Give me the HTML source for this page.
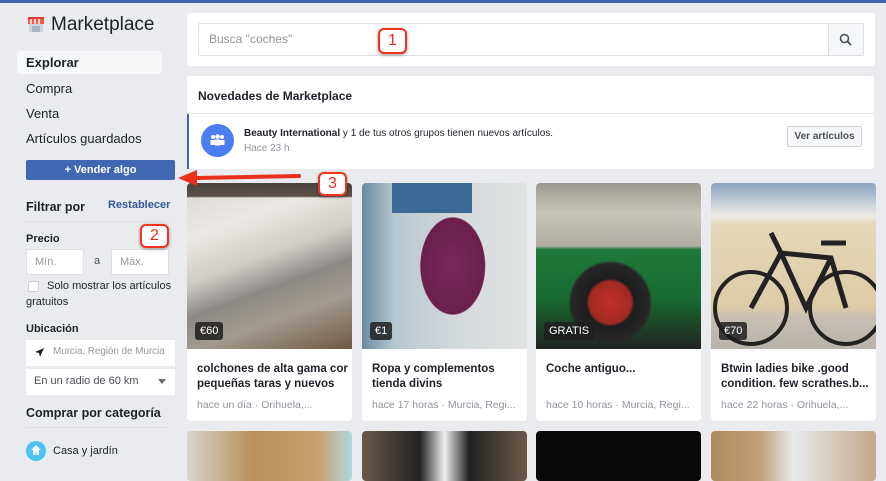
<!DOCTYPE html>
<html><head><meta charset="utf-8"><style>
*{margin:0;padding:0;box-sizing:border-box}
body{width:886px;height:471px;overflow:hidden;background:#e9ebee;font-family:"Liberation Sans",Helvetica,Arial,sans-serif;color:#1d2129;position:relative;font-size:12px}
.a{position:absolute}
.topbar{left:0;top:0;width:886px;height:3px;background:#4267b2}
.nav{left:26px;font-size:13px;color:#1d2129}
.inp{background:#fff;border:1px solid #dddfe2;color:#999;font-size:11px;padding-left:8px;line-height:24px;height:26px;white-space:nowrap;overflow:hidden}
.badge{background:#fff;border:2px solid #f0321e;border-radius:6px;color:#e8301c;font-size:16px;text-align:center;box-shadow:0 1px 3px rgba(0,0,0,.4)}
.card{background:#fff;border-radius:4px;overflow:hidden;width:165px}
.img{height:166px;position:relative}
.price{position:absolute;left:8px;bottom:9px;background:rgba(30,30,30,.85);color:#fff;font-size:11px;padding:3px 5px;border-radius:3px}
.t{font-weight:bold;font-size:11.5px;padding:13px 10px 0;line-height:15px;height:50px;white-space:nowrap;overflow:hidden}
.m{color:#90949c;font-size:10.5px;padding:0 10px 0;white-space:nowrap}
</style></head><body>
<div class="a topbar"></div>
<svg class="a" style="left:27px;top:16px" width="18" height="17" viewBox="0 0 18 17"><rect x="2" y="7" width="14" height="9" fill="#cdd3dc"/><rect x="5" y="10" width="8" height="6" fill="#a8b2c0"/><path d="M1 3h16v5H1z" fill="#f35a4a"/><path d="M4 3v5M8 3v5M12 3v5" stroke="#fff" stroke-width="1.5"/><rect x="1" y="1" width="16" height="2" fill="#e03a2c"/></svg>
<div class="a" style="left:51px;top:14px;font-size:19px;color:#1d2129">Marketplace</div>
<div class="a" style="left:17px;top:51px;width:145px;height:23px;background:#f6f7f9;border-radius:3px"></div>
<div class="a nav" style="top:55px;font-weight:bold">Explorar</div>
<div class="a nav" style="top:81px">Compra</div>
<div class="a nav" style="top:106px">Venta</div>
<div class="a nav" style="top:131px">Artículos guardados</div>
<div class="a" style="left:26px;top:160px;width:149px;height:20px;background:#4267b2;border-radius:2px;color:#fff;font-weight:bold;font-size:11px;text-align:center;line-height:20px">+ Vender algo</div>
<div class="a" style="left:26px;top:200px;font-weight:bold;font-size:12.5px">Filtrar por</div>
<div class="a" style="left:108px;top:199px;font-weight:bold;font-size:11px;color:#365899">Restablecer</div>
<div class="a" style="left:26px;top:221px;width:141px;height:1px;background:#dddfe2"></div>
<div class="a" style="left:26px;top:233px;font-weight:bold;font-size:11px">Precio</div>
<div class="a inp" style="left:26px;top:249px;width:58px">Mín.</div>
<div class="a" style="left:94px;top:255px;font-size:11px;color:#4b4f56">a</div>
<div class="a inp" style="left:111px;top:249px;width:58px">Máx.</div>
<div class="a" style="left:28px;top:281px;width:11px;height:11px;background:#fff;border:1px solid #ccd0d5;border-radius:2px"></div>
<div class="a" style="left:47px;top:280px;font-size:11px;color:#1d2129">Solo mostrar los artículos</div>
<div class="a" style="left:26px;top:296px;font-size:11px">gratuitos</div>
<div class="a" style="left:26px;top:323px;font-weight:bold;font-size:11px">Ubicación</div>
<div class="a inp" style="left:26px;top:340px;width:149px;padding-left:27px;border:none;font-size:10px;letter-spacing:-.1px">Murcia, Región de Murcia</div>
<svg class="a" style="left:34px;top:347px" width="11" height="11" viewBox="0 0 11 11"><path d="M10 1L1 5l4 1 1 4z" fill="#1d2129"/></svg>
<div class="a inp" style="left:26px;top:369px;width:149px;color:#4b4f56;border:none">En un radio de 60 km</div>
<div class="a" style="left:158px;top:379px;border-left:4px solid transparent;border-right:4px solid transparent;border-top:5px solid #606770"></div>
<div class="a" style="left:26px;top:406px;font-weight:bold;font-size:12.5px">Comprar por categoría</div>
<div class="a" style="left:26px;top:427px;width:141px;height:1px;background:#dddfe2"></div>
<div class="a" style="left:26px;top:441px;width:20px;height:20px;border-radius:50%;background:#4cc3f0"></div>
<svg class="a" style="left:30px;top:444px" width="12" height="12" viewBox="0 0 12 12"><path d="M6 1L1 6h2v5h2.5V8h1v3H9V6h2z" fill="#fff"/></svg>
<div class="a" style="left:53px;top:445px;font-size:11px">Casa y jardín</div>

<div class="a" style="left:187px;top:13px;width:688px;height:53px;background:#fff;border-radius:3px"></div>
<div class="a" style="left:198px;top:23px;width:666px;height:33px;border:1px solid #dddfe2;border-radius:2px;background:#fff"></div>
<div class="a" style="left:209px;top:32px;font-size:12px;color:#90949c">Busca "coches"</div>
<div class="a" style="left:828px;top:24px;width:35px;height:31px;background:#f5f6f7;border-left:1px solid #dddfe2"></div>
<svg class="a" style="left:839px;top:33px" width="13" height="13" viewBox="0 0 13 13"><circle cx="5.5" cy="5.5" r="4" stroke="#4b4f56" stroke-width="1.6" fill="none"/><path d="M8.5 8.5L12 12" stroke="#4b4f56" stroke-width="1.8"/></svg>
<div class="a badge" style="left:378px;top:28px;width:29px;height:26px;line-height:22px">1</div>

<div class="a" style="left:187px;top:76px;width:687px;height:93px;background:#fff;border-radius:3px"></div>
<div class="a" style="left:198px;top:89px;font-weight:bold;font-size:12px">Novedades de Marketplace</div>
<div class="a" style="left:187px;top:113px;width:687px;height:1px;background:#e5e5e5"></div>
<div class="a" style="left:187px;top:114px;width:2px;height:55px;background:#4267b2"></div>
<div class="a" style="left:201px;top:124px;width:33px;height:33px;border-radius:50%;background:#4a7df0"></div>
<svg class="a" style="left:209px;top:134px" width="17" height="12" viewBox="0 0 17 12"><g fill="#fff"><circle cx="4" cy="3" r="2"/><circle cx="8.5" cy="2.5" r="2.3"/><circle cx="13" cy="3" r="2"/><rect x="1.5" y="6" width="5" height="5"/><rect x="6" y="5.5" width="5" height="6"/><rect x="10.5" y="6" width="5" height="5"/></g></svg>
<div class="a" style="left:244px;top:128px;font-size:10px"><b>Beauty International</b> y 1 de tus otros grupos tienen nuevos artículos.</div>
<div class="a" style="left:244px;top:143px;font-size:10px;color:#90949c">Hace 23 h</div>
<div class="a" style="left:787px;top:126px;width:75px;height:21px;background:#f6f7f9;border:1px solid #ced0d4;border-radius:2px;font-weight:bold;font-size:10px;color:#4b4f56;text-align:center;line-height:19px">Ver artículos</div>

<div class="a card" style="left:187px;top:183px;height:238px">
 <div class="img" style="background:linear-gradient(180deg,#4a4440 0,#5a5048 8%,transparent 9%),linear-gradient(160deg,#d8d6d2 0,#ece9e4 25%,#cfccc6 45%,#8d8a86 60%,#a29a8e 75%,#6e5a44 100%)"><div class="price">€60</div></div>
 <div class="t">colchones de alta gama cor<br>pequeñas taras y nuevos</div><div class="m">hace un día · Orihuela,...</div></div>
<div class="a card" style="left:362px;top:183px;height:238px">
 <div class="img" style="background:radial-gradient(ellipse 40px 60px at 55% 50%,#7a2a5a 0,#6b1f4a 80%,transparent 82%),linear-gradient(90deg,#6a8aa0 0,#b8c8d0 20%,#d4dadc 60%,#e0e2e2 100%)"><div style="position:absolute;left:30px;top:0;width:80px;height:30px;background:#3d6a95"></div><div class="price">€1</div></div>
 <div class="t">Ropa y complementos<br>tienda divins</div><div class="m">hace 17 horas · Murcia, Regi...</div></div>
<div class="a card" style="left:536px;top:183px;height:238px">
 <div class="img" style="background:radial-gradient(circle at 45% 72%,#c0302a 0,#a02a22 14%,#1e1e1e 16%,#262626 26%,transparent 28%),linear-gradient(180deg,#9a9890 0,#c9c4b8 18%,#b0aca4 38%,#1f7a3a 40%,#176a30 70%,#222 100%)"><div class="price">GRATIS</div></div>
 <div class="t">Coche antiguo...</div><div class="m">hace 10 horas · Murcia, Regi...</div></div>
<div class="a card" style="left:711px;top:183px;height:238px">
 <div class="img" style="background:linear-gradient(180deg,#8aa4c0 0,#eeeae4 20%,#e4d8b8 25%,#dccca6 75%,#c8c0b4 80%,#b8b2aa 100%)"><svg style="position:absolute;left:0;top:30px" width="165" height="136"><circle cx="40" cy="95" r="36" stroke="#222" stroke-width="4" fill="none"/><circle cx="135" cy="95" r="36" stroke="#222" stroke-width="4" fill="none"/><path d="M40 95L70 40 120 45 135 95M70 40L95 95 120 45M60 20l10 20M110 30h25" stroke="#222" stroke-width="5" fill="none"/></svg><div class="price">€70</div></div>
 <div class="t">Btwin ladies bike .good<br>condition. few scrathes.b...</div><div class="m">hace 22 horas · Orihuela,...</div></div>
<div class="a card" style="left:187px;top:431px;height:50px;background:linear-gradient(90deg,#d8d4cc,#b8905a 40%,#c8a070 80%,#b0d8e0)"></div>
<div class="a card" style="left:362px;top:431px;height:50px;background:linear-gradient(90deg,#6a5a48,#222 35%,#eee 50%,#222 65%,#6a5a48)"></div>
<div class="a card" style="left:536px;top:431px;height:50px;background:#080808"></div>
<div class="a card" style="left:711px;top:431px;height:50px;background:linear-gradient(90deg,#b08a60 0,#c0a078 30%,#e8eaec 50%,#c0a888 100%)"></div>

<svg class="a" style="left:175px;top:160px" width="130" height="30"><path d="M124 16L20 18" stroke="#e8301c" stroke-width="4" stroke-linecap="round"/><path d="M3 18L22 10 22 26z" fill="#e8301c"/></svg>
<div class="a badge" style="left:318px;top:172px;width:29px;height:24px;line-height:20px">3</div>
<div class="a badge" style="left:140px;top:224px;width:29px;height:24px;line-height:20px">2</div>
</body></html>
